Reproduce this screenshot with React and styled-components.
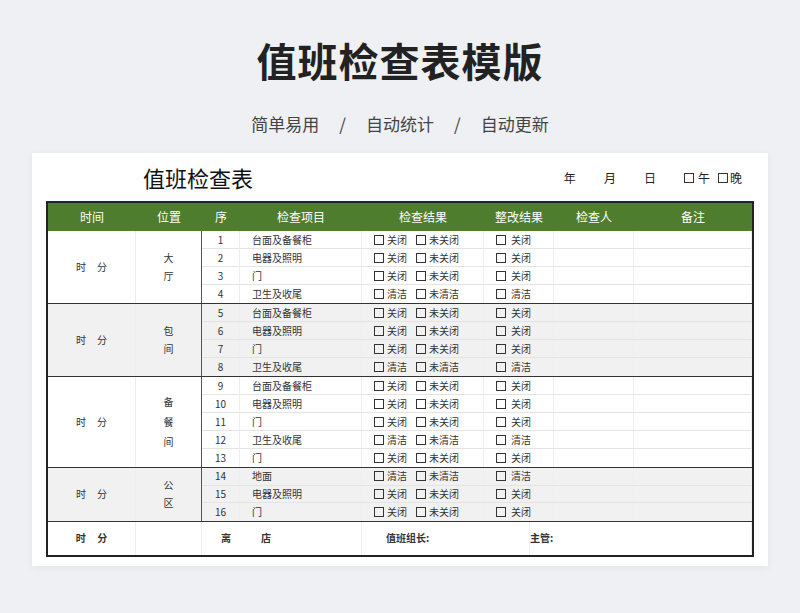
import React from "react";
import styled, { createGlobalStyle } from "styled-components";

const G = createGlobalStyle`
  body{margin:0;background:#eef0f3;font-family:"Noto Sans CJK SC","Noto Sans",sans-serif;}
`;
const Page = styled.div`width:800px;height:613px;display:flex;flex-direction:column;align-items:center;`;
const Title = styled.h1`margin:34px 0 0;font-size:40px;font-weight:700;color:#222;letter-spacing:1px;line-height:52px;`;
const Sub = styled.div`margin-top:26px;font-size:17px;color:#444;display:flex;gap:20px;line-height:24px;`;
const Card = styled.div`margin-top:17px;width:736px;height:413px;background:#fff;box-sizing:border-box;padding:0 14px;box-shadow:0 2px 8px rgba(0,0,0,.05);`;
const Head = styled.div`height:48px;display:flex;align-items:center;`;
const SheetTitle = styled.div`margin-left:97px;font-size:22px;color:#111;flex:1;`;
const DateBox = styled.div`display:flex;gap:28px;font-size:12px;color:#222;margin-right:12px;align-items:center;`;
const Box = styled.span`display:inline-block;width:8px;height:8px;border:1px solid #333;margin-right:${p=>p.m||3}px;`;
const Table = styled.div`border:2px solid #222;font-size:10px;color:#333;line-height:1;`;
const cols = "88px 66px 38px 122px 122px 70px 80px 1fr";
const HeadRow = styled.div`display:grid;grid-template-columns:${cols};height:28px;background:#4e7d2e;color:#fff;font-size:12px;align-items:center;text-align:center;`;
const Group = styled.div`display:grid;grid-template-columns:${cols};grid-auto-rows:${p=>p.h}px;background:${p=>p.gray?"#f1f1f1":"#fff"};border-top:${p=>p.first?"none":"1.5px solid #333"};`;
const Span = styled.div`grid-row:1 / span ${p=>p.n};grid-column:${p=>p.c};display:flex;align-items:center;justify-content:center;font-size:10px;border-right:${p=>p.dark?"1.5px solid #555":"1px solid #eee"};${p=>p.v&&"flex-direction:column;gap:"+p.gap+"px;"}`;
const Cell = styled.div`display:flex;align-items:center;padding-left:${p=>p.pl||0}px;justify-content:${p=>p.center?"center":"flex-start"};border-bottom:${p=>p.last?"none":"1px solid #e4e4e4"};border-right:1px solid #eee;white-space:nowrap;`;
const Foot = styled.div`display:grid;grid-template-columns:88px 66px 160px 168px 1fr;height:33px;border-top:1.5px solid #333;font-weight:700;font-size:10px;align-items:stretch;`;
const FCell = styled.div`display:flex;align-items:center;justify-content:${p=>p.j||"center"};padding-left:${p=>p.pl||0}px;border-right:1px solid #eee;gap:${p=>p.g||0}px;`;
const Gap = styled.span`width:9px;`;

const groups=[
 {t:"大厅",gray:false,h:18,rows:[["台面及备餐柜","关闭","未关闭"],["电器及照明","关闭","未关闭"],["门","关闭","未关闭"],["卫生及收尾","清洁","未清洁"]]},
 {t:"包间",gray:true,h:18,rows:[["台面及备餐柜","关闭","未关闭"],["电器及照明","关闭","未关闭"],["门","关闭","未关闭"],["卫生及收尾","清洁","未清洁"]]},
 {t:"备餐间",gray:false,h:18,rows:[["台面及备餐柜","关闭","未关闭"],["电器及照明","关闭","未关闭"],["门","关闭","未关闭"],["卫生及收尾","清洁","未清洁"],["门","关闭","未关闭"]]},
 {t:"公区",gray:true,h:17.5,rows:[["地面","清洁","未清洁"],["电器及照明","关闭","未关闭"],["门","关闭","未关闭"]]},
];

export default function App(){
  let n=0;
  return <Page><G/>
    <Title>值班检查表模版</Title>
    <Sub><span>简单易用</span><span>/</span><span>自动统计</span><span>/</span><span>自动更新</span></Sub>
    <Card>
      <Head><SheetTitle>值班检查表</SheetTitle>
        <DateBox><span>年</span><span>月</span><span>日</span><span><Box m={4}/>午&nbsp;&nbsp;&nbsp;<Box m={2}/>晚</span></DateBox>
      </Head>
      <Table>
        <HeadRow>{["时间","位置","序","检查项目","检查结果","整改结果","检查人","备注"].map(h=><div key={h}>{h}</div>)}</HeadRow>
        {groups.map((g,gi)=>(
          <Group key={gi} h={g.h} gray={g.gray} first={gi===0}>
            <Span n={g.rows.length} c={1}>时&nbsp;&nbsp;&nbsp;&nbsp;&nbsp;分</Span>
            <Span n={g.rows.length} c={2} v gap={g.t.length===3?10:8} dark>{[...g.t].map((c,i)=><span key={i}>{c}</span>)}</Span>
            {g.rows.map((r,ri)=>{n++;const last=ri===g.rows.length-1;return <React.Fragment key={ri}>
              <Cell center last={last}>{n}</Cell>
              <Cell pl={12} last={last}>{r[0]}</Cell>
              <Cell pl={12} last={last}><Box/>{r[1]}<Gap/><Box/>{r[2]}</Cell>
              <Cell pl={12} last={last}><Box m={5}/>{r[1]}</Cell>
              <Cell last={last}/>
              <Cell last={last}/>
            </React.Fragment>})}
          </Group>
        ))}
        <Foot>
          <FCell>时&nbsp;&nbsp;&nbsp;&nbsp;&nbsp;分</FCell>
          <FCell/>
          <FCell j="flex-start" pl={19} g={30}><span>离</span><span>店</span></FCell>
          <FCell j="flex-start" pl={24}>值班组长:</FCell>
          <FCell j="flex-start">主管:</FCell>
        </Foot>
      </Table>
    </Card>
  </Page>;
}
